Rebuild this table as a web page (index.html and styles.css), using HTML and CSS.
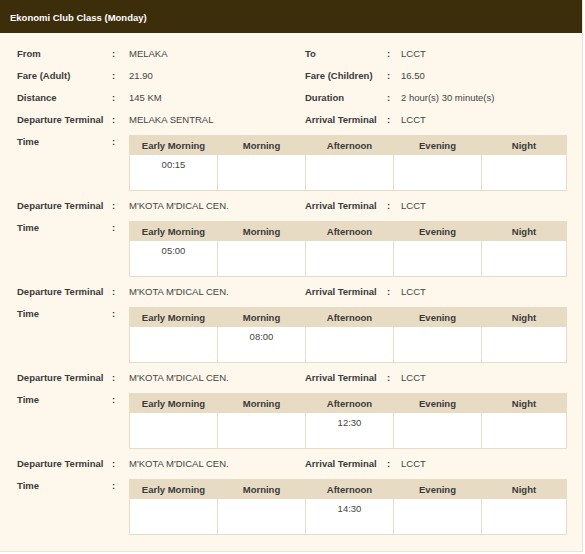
FILE: index.html
```html
<!DOCTYPE html>
<html>
<head>
<meta charset="utf-8">
<link rel="stylesheet" href="styles.css">
</head>
<body>
<div class="panel">
  <div class="panel-head">Ekonomi Club Class (Monday)</div>
  <div class="panel-body">
    <div class="info">
      <div class="lbl">From</div><div class="col">:</div><div class="val">MELAKA</div>
      <div class="lbl">To</div><div class="col">:</div><div class="val">LCCT</div>

      <div class="lbl">Fare (Adult)</div><div class="col">:</div><div class="val">21.90</div>
      <div class="lbl">Fare (Children)</div><div class="col">:</div><div class="val">16.50</div>

      <div class="lbl">Distance</div><div class="col">:</div><div class="val">145 KM</div>
      <div class="lbl">Duration</div><div class="col">:</div><div class="val">2 hour(s) 30 minute(s)</div>

      <div class="lbl">Departure Terminal</div><div class="col">:</div><div class="val">MELAKA SENTRAL</div>
      <div class="lbl">Arrival Terminal</div><div class="col">:</div><div class="val">LCCT</div>

      <div class="lbl">Time</div><div class="col">:</div>
      <div class="slot">
        <table class="times">
          <tr class="hrow"><th>Early Morning</th><th>Morning</th><th>Afternoon</th><th>Evening</th><th>Night</th></tr>
          <tr class="brow"><td>00:15</td><td></td><td></td><td></td><td></td></tr>
        </table>
      </div>

      <div class="lbl">Departure Terminal</div><div class="col">:</div><div class="val">M'KOTA M'DICAL CEN.</div>
      <div class="lbl">Arrival Terminal</div><div class="col">:</div><div class="val">LCCT</div>

      <div class="lbl">Time</div><div class="col">:</div>
      <div class="slot">
        <table class="times">
          <tr class="hrow"><th>Early Morning</th><th>Morning</th><th>Afternoon</th><th>Evening</th><th>Night</th></tr>
          <tr class="brow"><td>05:00</td><td></td><td></td><td></td><td></td></tr>
        </table>
      </div>

      <div class="lbl">Departure Terminal</div><div class="col">:</div><div class="val">M'KOTA M'DICAL CEN.</div>
      <div class="lbl">Arrival Terminal</div><div class="col">:</div><div class="val">LCCT</div>

      <div class="lbl">Time</div><div class="col">:</div>
      <div class="slot">
        <table class="times">
          <tr class="hrow"><th>Early Morning</th><th>Morning</th><th>Afternoon</th><th>Evening</th><th>Night</th></tr>
          <tr class="brow"><td></td><td>08:00</td><td></td><td></td><td></td></tr>
        </table>
      </div>

      <div class="lbl">Departure Terminal</div><div class="col">:</div><div class="val">M'KOTA M'DICAL CEN.</div>
      <div class="lbl">Arrival Terminal</div><div class="col">:</div><div class="val">LCCT</div>

      <div class="lbl">Time</div><div class="col">:</div>
      <div class="slot">
        <table class="times">
          <tr class="hrow"><th>Early Morning</th><th>Morning</th><th>Afternoon</th><th>Evening</th><th>Night</th></tr>
          <tr class="brow"><td></td><td></td><td>12:30</td><td></td><td></td></tr>
        </table>
      </div>

      <div class="lbl">Departure Terminal</div><div class="col">:</div><div class="val">M'KOTA M'DICAL CEN.</div>
      <div class="lbl">Arrival Terminal</div><div class="col">:</div><div class="val">LCCT</div>

      <div class="lbl">Time</div><div class="col">:</div>
      <div class="slot">
        <table class="times">
          <tr class="hrow"><th>Early Morning</th><th>Morning</th><th>Afternoon</th><th>Evening</th><th>Night</th></tr>
          <tr class="brow"><td></td><td></td><td>14:30</td><td></td><td></td></tr>
        </table>
      </div>
    </div>
  </div>
</div>
</body>
</html>
```

FILE: styles.css
```css
html, body {
  margin: 0;
  padding: 0;
  background: #ffffff;
}
body {
  font-family: "Liberation Sans", Arial, sans-serif;
  font-size: 9.5px;
  color: #444;
}
.panel {
  width: 582px;
  border-right: 1px solid #ece2d1;
  border-bottom: 1px solid #ece2d1;
  background: #fdf7ec;
}
.panel-head {
  height: 33px;
  background: #3c2d0b;
  color: #ffffff;
  font-weight: bold;
  display: flex;
  align-items: center;
  padding-left: 10px;
  padding-top: 2px;
  box-sizing: border-box;
}
.panel-body {
  padding: 10px 0 12px 17px;
}
.info {
  display: grid;
  grid-template-columns: 95px 17px 176px 82px 14px 1fr;
}
.lbl, .col, .val {
  height: 22px;
  line-height: 22px;
  white-space: nowrap;
}
.lbl, .col {
  font-weight: bold;
  color: #3a3a3a;
}
.val {
  color: #444;
}
.slot {
  grid-column: 3 / 7;
  padding: 4px 0 4px 0;
  height: 64px;
  box-sizing: border-box;
}
.times {
  border-collapse: collapse;
  width: 438px;
  table-layout: fixed;
}
.times .hrow {
  height: 19px;
}
.times .brow {
  height: 36px;
}
.times th {
  background: #e8dbc3;
  padding: 0;
  font-weight: bold;
  color: #3a3a3a;
  text-align: center;
  vertical-align: middle;
  border: 1px solid #e8dbc3;
  line-height: 17px;
}
.times td {
  background: #ffffff;
  padding: 3px 0 0 0;
  border: 1px solid #e7dcc7;
  text-align: center;
  vertical-align: top;
  color: #444;
  line-height: 13px;
}
.times th:nth-child(-n+4), .times td:nth-child(-n+4) {
  width: 87px;
}
```
